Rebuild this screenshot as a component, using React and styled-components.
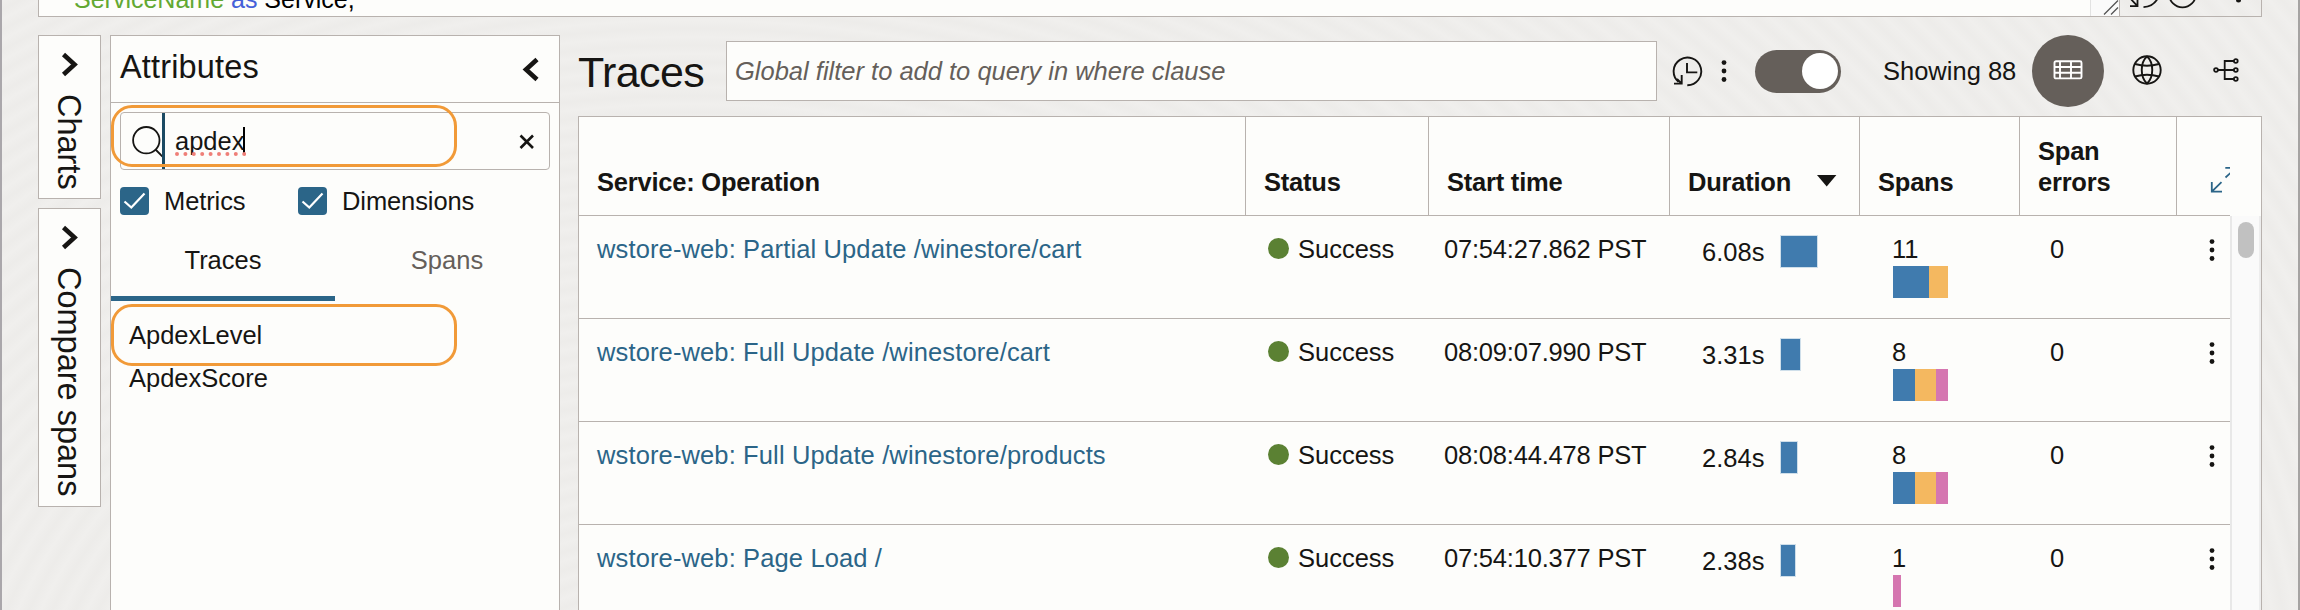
import React from 'react';
import styled, { createGlobalStyle } from 'styled-components';

const LINE = '#b8b2ae';
const INK = '#161513';
const BLUE = '#2b6588';
const SURFACE = '#fdfdfb';
const GREY = '#655f5a';

const GlobalStyle = createGlobalStyle`
  * { box-sizing: border-box; }
  body {
    margin: 0;
    overflow: hidden;
    color: ${INK};
    font-family: "Liberation Sans", Arial, sans-serif;
    font-size: 25.5px;
    line-height: 31px;
  }
`;

const Window = styled.div`
  position: relative;
  width: 2300px;
  height: 610px;
  padding: 0 36px;
  overflow: hidden;
  border-left: 2px solid #aaa7ab;
  border-right: 2px solid #a5a3a2;
  background:
    repeating-radial-gradient(ellipse 900px 700px at 30% 130%, rgba(110,105,95,0) 0, rgba(110,105,95,.025) 1.2%, rgba(110,105,95,0) 2.4%),
    #f0efed;
`;

const QueryPanel = styled.div`
  display: flex;
  height: 17px;
  overflow: hidden;
  border: 1px solid ${LINE};
  border-top: 0;
`;

const QueryEditor = styled.div`
  flex: 1;
  display: flex;
  justify-content: space-between;
  padding-left: 35px;
  background: ${SURFACE};
  border-right: 1px solid ${LINE};
`;

const Code = styled.div`
  margin-top: -16px;
  font-size: 25px;
  white-space: pre;
  line-height: 30px;
  color: #000;
`;

const Token = styled.span`
  color: ${(p) => p.$color};
`;

const ResizeCorner = styled.div`
  width: 29px;
  height: 16px;
  background: #fafafa;
  border-left: 1px solid #e2e2e2;
`;

const Body = styled.div`
  display: flex;
  height: 575px;
  margin-top: 18px;
`;

const Rail = styled.div`
  display: flex;
  flex-direction: column;
  gap: 9px;
  width: 63px;
  margin-right: 9px;
`;

const RailTab = styled.div`
  height: ${(p) => p.$height}px;
  padding-top: 15px;
  background: ${SURFACE};
  border: 1px solid ${LINE};
`;

const RailIcon = styled.div`
  height: 29px;
  padding-left: 20px;
`;

const RailLabel = styled.div`
  writing-mode: vertical-rl;
  margin-top: 14px;
  font-size: 32.5px;
  line-height: 60px;
  white-space: nowrap;
`;

const AttributesPanel = styled.section`
  position: relative;
  width: 450px;
  margin-right: 18px;
  background: ${SURFACE};
  border: 1px solid ${LINE};
  border-bottom: 0;
`;

const PanelHeader = styled.header`
  display: flex;
  justify-content: space-between;
  height: 67px;
  padding: 0 19px 0 9px;
  border-bottom: 1px solid ${LINE};
  font-size: 32.5px;
  line-height: 62px;
  letter-spacing: 0.15px;

  svg { margin-top: 19px; }
`;

const SearchBox = styled.div`
  display: flex;
  height: 58px;
  margin: 9px 9px 0 9px;
  border: 1px solid ${LINE};
  border-radius: 4px;
`;

const SearchIcon = styled.div`
  width: 44px;
  height: 56px;
  border-right: 3px solid #1b4a63;
`;

const SearchText = styled.div`
  position: relative;
  flex: 1;
  padding: 13px 0 0 10px;
`;

const Caret = styled.span`
  display: inline-block;
  width: 2px;
  height: 28px;
  margin-left: -1px;
  vertical-align: -5px;
  background: #000;
`;

const SpellMarks = styled.svg`
  position: absolute;
  left: 9px;
  top: 38px;
`;

const ClearIcon = styled.div`
  width: 30px;
  padding-top: 21px;
`;

const CheckRow = styled.div`
  display: flex;
  height: 28px;
  margin: 17px 0 0 9px;
`;

const CheckItem = styled.div`
  display: flex;
  width: 178px;
  line-height: 28px;
  letter-spacing: -0.1px;
`;

const CheckMark = styled.div`
  width: 29px;
  height: 28px;
  margin-right: 15px;
  border-radius: 4px;
  background: ${BLUE};
`;

const Tabs = styled.div`
  display: flex;
  margin-top: 30px;
`;

const Tab = styled.div`
  width: 224px;
  height: 56px;
  text-align: center;
  color: ${(p) => (p.$active ? INK : GREY)};
  border-bottom: 5px solid ${(p) => (p.$active ? BLUE : 'transparent')};
`;

const AttributeList = styled.div`
  padding: 13px 0 0 18px;
  line-height: 43px;
`;

const Highlight = styled.div`
  position: absolute;
  left: 0;
  top: ${(p) => p.$top}px;
  width: 346px;
  height: 62px;
  border: 3px solid #f19a38;
  border-radius: 21px;
`;

const Main = styled.main`
  display: flex;
  flex-direction: column;
  width: 1684px;
`;

const Toolbar = styled.div`
  display: flex;
  align-items: center;
  height: 72px;
  margin-bottom: 9px;

  > * { flex-shrink: 0; }
`;

const Title = styled.h1`
  width: 148px;
  margin: 0;
  font-size: 43px;
  font-weight: 400;
  line-height: 72px;
  padding-top: 2px;
  letter-spacing: -0.6px;
`;

const Filter = styled.div`
  width: 931px;
  height: 60px;
  padding: 14px 8px;
  border: 1px solid ${LINE};
  background: ${SURFACE};
  color: ${GREY};
  font-style: italic;
`;

const HistorySlot = styled.div`
  width: 32px;
  height: 32px;
  margin: 0 15px 0 14px;
`;

const DotsSlot = styled.div`
  display: flex;
  justify-content: center;
  width: 12px;
`;

const Toggle = styled.div`
  display: flex;
  justify-content: flex-end;
  width: 86px;
  height: 43px;
  margin-left: 25px;
  padding: 3.5px;
  border-radius: 22px;
  background: ${GREY};
`;

const Knob = styled.div`
  width: 36px;
  height: 36px;
  border-radius: 50%;
  background: #fff;
`;

const Count = styled.div`
  width: 149px;
  padding: 1px 0 0;
  margin-left: 42px;
  white-space: nowrap;
`;

const ViewButton = styled.div`
  display: flex;
  align-items: center;
  justify-content: center;
  width: 72px;
  height: 72px;
  margin-right: 7px;
  padding-bottom: 3px;
  border-radius: 50%;
  background: ${(p) => (p.$active ? GREY : 'transparent')};

  &:last-child { margin-right: 0; }
`;

const Table = styled.div`
  display: flex;
  flex: 1;
  flex-direction: column;
  overflow: hidden;
  border: 1px solid ${LINE};
  border-bottom: 0;
  background: ${SURFACE};
`;

const Grid = styled.div`
  display: grid;
  flex-shrink: 0;
  grid-template-columns: 667px 183px 241px 190px 160px 157px 53px;
  width: 1651px;
  border-bottom: 1px solid ${LINE};
`;

const HeadRow = styled(Grid)`
  height: 99px;
  font-weight: 700;
  letter-spacing: -0.22px;
`;

const HeadCell = styled.div`
  display: flex;
  align-items: flex-end;
  padding: 0 0 17px 18px;
  border-right: ${(p) => (p.$last ? 0 : 1)}px solid ${LINE};
`;

const SortArrow = styled.svg`
  margin: 0 0 11px 26px;
`;

const ExpandIcon = styled.svg`
  margin: 0 0 5px 15px;
`;

const TableBody = styled.div`
  display: flex;
  flex: 1;
`;

const Rows = styled.div`
  width: 1651px;
`;

const Row = styled(Grid)`
  height: 103px;
`;

const Cell = styled.div`
  padding: 18px 0 0 ${(p) => p.$inset}px;
  white-space: nowrap;
`;

const LinkCell = styled(Cell)`
  color: ${BLUE};
  letter-spacing: 0.13px;
`;

const StatusCell = styled(Cell)`
  display: flex;
  gap: 9px;
`;

const StatusDot = styled.span`
  width: 21px;
  height: 21px;
  margin-top: 4px;
  border-radius: 50%;
  background: #5b8133;
`;

const TimeCell = styled(Cell)`
  letter-spacing: -0.2px;
`;

const DurationCell = styled(Cell)`
  display: flex;
`;

const DurationText = styled.span`
  width: 78px;
  padding-top: 3px;
`;

const Bar = styled.span`
  display: block;
  width: ${(p) => p.$width}px;
  height: ${(p) => p.$height || 32}px;
  background: ${(p) => p.$color};
`;

const DurationBar = styled(Bar)`
  margin-top: 1px;
  border: 1px solid #cfdfea;
  background-clip: padding-box;
`;

const SpanBars = styled.div`
  display: flex;
  margin: 1px 0 0 0.5px;
`;

const ScrollTrack = styled.div`
  width: 31px;
  padding: 6px 0 0 6px;
  border-left: 2px solid #e8e8e8;
  border-right: 2px solid #ededed;
  background: #fafafa;
`;

const ScrollThumb = styled.div`
  width: 16px;
  height: 36px;
  border-radius: 8px;
  background: #c1c1c1;
`;

const Chevron = ({ left }) => (
  <svg width="20" height="29" viewBox="0 0 20 29" fill="none" stroke={INK} strokeWidth="4.6">
    <path d={left ? 'M17 4.5 L6 14.5 L17 24.5' : 'M4.5 3.5 L15.5 13.5 L4.5 23.5'} />
  </svg>
);

const Dots = () => (
  <svg width="6" height="28" viewBox="0 0 6 28" fill={INK} display="block">
    <circle cx="3" cy="5.6" r="2.4" />
    <circle cx="3" cy="14" r="2.4" />
    <circle cx="3" cy="22.5" r="2.4" />
  </svg>
);

const RowMenu = styled.div`
  padding: 20px 0 0 31.5px;
`;

const Checkbox = ({ label }) => (
  <CheckItem>
    <CheckMark>
      <svg width="29" height="28" fill="none" stroke="#fff" strokeWidth="2.2" display="block">
        <path d="M4.5 14.5 L11.3 20.5 L24.5 6.5" />
      </svg>
    </CheckMark>
    {label}
  </CheckItem>
);

const B = '#407bae';
const Y = '#f4b860';
const P = '#d576b0';

const traces = [
  { op: 'wstore-web: Partial Update /winestore/cart', time: '07:54:27.862 PST', dur: '6.08s', w: 38, n: '11', bars: [[B, 36], [Y, 19]] },
  { op: 'wstore-web: Full Update /winestore/cart', time: '08:09:07.990 PST', dur: '3.31s', w: 21, n: '8', bars: [[B, 22], [Y, 21], [P, 12]] },
  { op: 'wstore-web: Full Update /winestore/products', time: '08:08:44.478 PST', dur: '2.84s', w: 18, n: '8', bars: [[B, 22], [Y, 21], [P, 12]] },
  { op: 'wstore-web: Page Load /', time: '07:54:10.377 PST', dur: '2.38s', w: 15.5, n: '1', bars: [[P, 8.5]] },
];

export default function App() {
  return (
    <Window>
      <GlobalStyle />
      <QueryPanel>
        <QueryEditor>
          <Code>
            <Token $color="#62a832">ServiceName</Token> <Token $color="#4560d8">as</Token> Service,
          </Code>
          <ResizeCorner>
            <svg width="28" height="16" fill="none" stroke="#555" strokeWidth="1.3" display="block">
              <path d="M13 14.5 L27 0.5 M20 14.5 L27 7.5" />
            </svg>
          </ResizeCorner>
        </QueryEditor>
        <svg width="141" height="16" fill="none" stroke={INK} strokeWidth="1.8">
          <path d="M10 6.2 H17.5 V-3 M17.5 6.2 L9 -3 M23.5 7.2 Q34 6.5 38.5 -3" />
          <circle cx="62.5" cy="-6" r="13.4" />
          <circle cx="118.5" cy="0" r="2.5" fill={INK} stroke="none" />
        </svg>
      </QueryPanel>

      <Body>
        <Rail>
          <RailTab $height={164}>
            <RailIcon><Chevron /></RailIcon>
            <RailLabel>Charts</RailLabel>
          </RailTab>
          <RailTab $height={299}>
            <RailIcon><Chevron /></RailIcon>
            <RailLabel>Compare spans</RailLabel>
          </RailTab>
        </Rail>

        <AttributesPanel>
          <PanelHeader>
            Attributes
            <Chevron left />
          </PanelHeader>
          <SearchBox>
            <SearchIcon>
              <svg width="41" height="56" fill="none" stroke={INK} strokeWidth="1.8" display="block">
                <circle cx="25.3" cy="27.2" r="13.2" />
                <path d="M34.5 36.5 L41.5 43.5" />
              </svg>
            </SearchIcon>
            <SearchText>
              apdex<Caret />
              <SpellMarks width="72" height="6">
                <path d="M3 3 H72" stroke="#ef7f78" strokeWidth="4" strokeLinecap="round" strokeDasharray="0 8.4" />
              </SpellMarks>
            </SearchText>
            <ClearIcon>
              <svg width="16" height="16" stroke={INK} strokeWidth="2.6" display="block">
                <path d="M1.5 1.5 L14 14 M14 1.5 L1.5 14" />
              </svg>
            </ClearIcon>
          </SearchBox>
          <CheckRow>
            <Checkbox label="Metrics" />
            <Checkbox label="Dimensions" />
          </CheckRow>
          <Tabs>
            <Tab $active>Traces</Tab>
            <Tab>Spans</Tab>
          </Tabs>
          <AttributeList>
            <div>ApdexLevel</div>
            <div>ApdexScore</div>
          </AttributeList>
          <Highlight $top={69} />
          <Highlight $top={268} />
        </AttributesPanel>

        <Main>
          <Toolbar>
            <Title>Traces</Title>
            <Filter>Global filter to add to query in where clause</Filter>
            <HistorySlot>
              <svg width="32" height="32" fill="none" stroke={INK} strokeWidth="1.9" display="block">
                <path d="M16.3 30.2 A13.8 13.8 0 1 0 7.6 27" />
                <path d="M10.7 20 V28.6 H3 M10.7 28.6 L6 24" />
                <path d="M16 8 V17.4 H26.3" />
              </svg>
            </HistorySlot>
            <DotsSlot><Dots /></DotsSlot>
            <Toggle><Knob /></Toggle>
            <Count>Showing 88</Count>
            <ViewButton $active>
              <svg width="30" height="20" fill="none" stroke="#fff" strokeWidth="1.9">
                <rect x="1.5" y="1.2" width="27" height="17.2" rx="1.5" />
                <path d="M1.5 7 H28.5 M1.5 12.7 H28.5 M7 1 V18.5 M18 1 V18.5" />
              </svg>
            </ViewButton>
            <ViewButton>
              <svg width="30" height="30" fill="none" stroke={INK} strokeWidth="1.9">
                <circle cx="15" cy="15" r="13.7" />
                <path d="M15 1.3 C8 8 8 22 15 28.7 M15 1.3 C22 8 22 22 15 28.7" />
                <path d="M3 9 Q15 12.5 27 9 M3 21.5 Q15 18 27 21.5" />
              </svg>
            </ViewButton>
            <ViewButton>
              <svg width="26" height="24" fill="none" stroke={INK} strokeWidth="1.8">
                <circle cx="3" cy="12" r="1.9" />
                <circle cx="22.8" cy="3" r="1.9" />
                <circle cx="22.8" cy="12" r="1.9" />
                <circle cx="22.8" cy="21" r="1.9" />
                <path d="M5 12 H21 M21 3 H11.7 V21 H21" />
              </svg>
            </ViewButton>
          </Toolbar>

          <Table>
            <HeadRow>
              <HeadCell>Service: Operation</HeadCell>
              <HeadCell>Status</HeadCell>
              <HeadCell>Start time</HeadCell>
              <HeadCell>
                Duration
                <SortArrow width="20" height="12"><path d="M0 0 H19.4 L9.7 11.5 Z" fill={INK} /></SortArrow>
              </HeadCell>
              <HeadCell>Spans</HeadCell>
              <HeadCell>Span<br />errors</HeadCell>
              <HeadCell $last>
                <ExpandIcon width="20" height="26" fill="none" stroke={BLUE} strokeWidth="1.8">
                  <path d="M1.8 15 V24.6 H12 M1.8 24.6 L11.5 15.2" />
                  <path d="M15.3 0.9 H26 V10 M15.5 10.5 L26 0.9" />
                </ExpandIcon>
              </HeadCell>
            </HeadRow>
            <TableBody>
              <Rows>
                {traces.map((t) => (
                  <Row key={t.time}>
                    <LinkCell $inset={18}>{t.op}</LinkCell>
                    <StatusCell $inset={22}><StatusDot />Success</StatusCell>
                    <TimeCell $inset={15}>{t.time}</TimeCell>
                    <DurationCell $inset={32}>
                      <DurationText>{t.dur}</DurationText>
                      <DurationBar $color={B} $width={t.w} $height={33} />
                    </DurationCell>
                    <Cell $inset={32}>
                      {t.n}
                      <SpanBars>
                        {t.bars.map(([c, w]) => <Bar key={c} $color={c} $width={w} />)}
                      </SpanBars>
                    </Cell>
                    <Cell $inset={30}>0</Cell>
                    <RowMenu><Dots /></RowMenu>
                  </Row>
                ))}
              </Rows>
              <ScrollTrack><ScrollThumb /></ScrollTrack>
            </TableBody>
          </Table>
        </Main>
      </Body>
    </Window>
  );
}
